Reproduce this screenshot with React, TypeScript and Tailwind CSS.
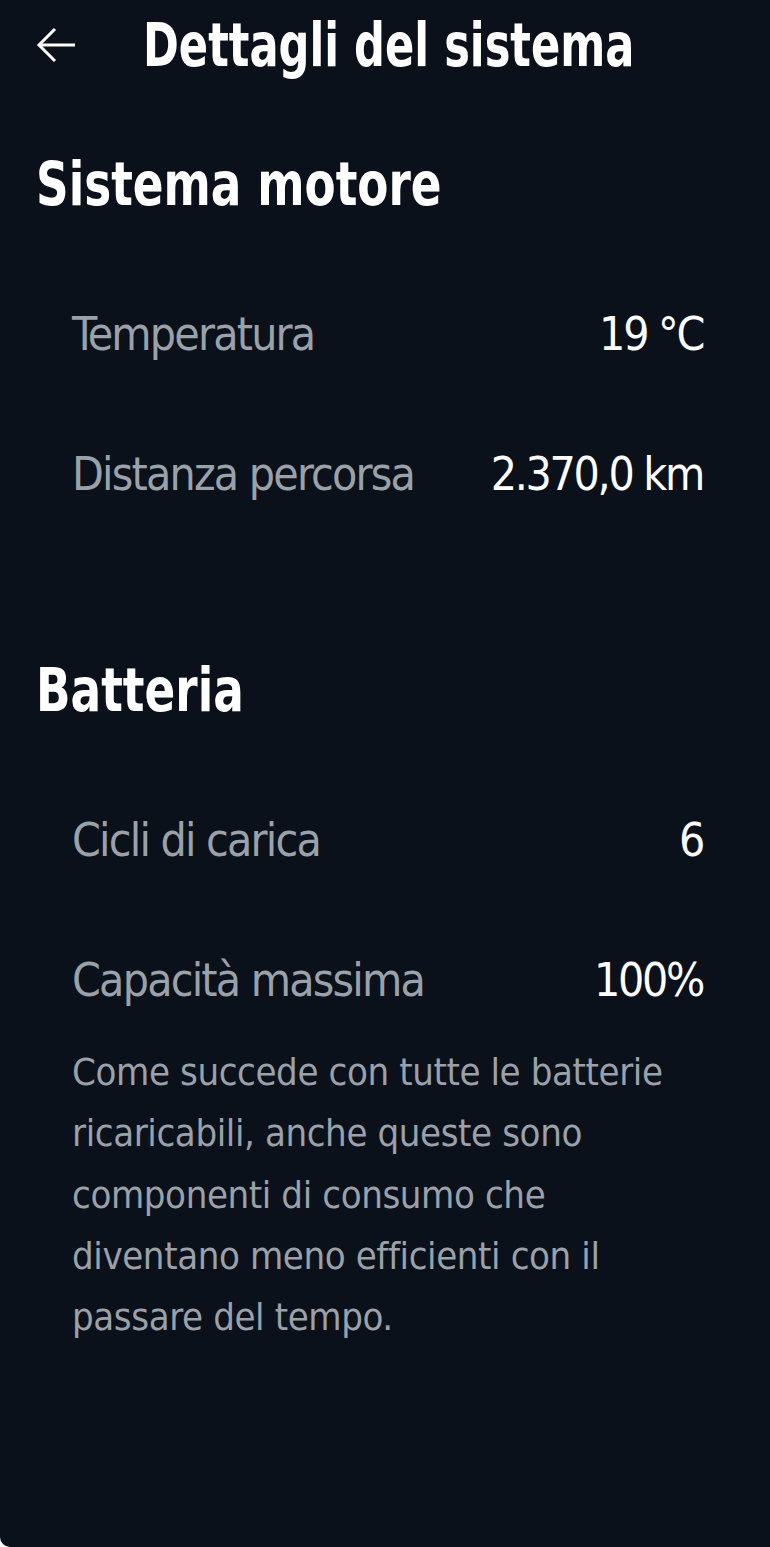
import React from 'react';

const font = { fontFamily: '"Liberation Sans Narrow", "DejaVu Sans Condensed", "Liberation Sans", sans-serif' };

const Row = ({ label, value }: { label: string; value: string }) => (
  <div className="h-[140px] flex items-center justify-between pl-[72px] pr-[67px]">
    <span className="text-[46px] text-[#9aa1a9] leading-none tracking-[-1.8px]">{label}</span>
    <span className="text-[46px] text-white leading-none tracking-[-2.3px]">{value}</span>
  </div>
);

const SectionTitle = ({ children }: { children: React.ReactNode }) => (
  <div className="h-[100px] flex items-center px-9">
    <h2 className="inline-block origin-left scale-x-[0.84] text-[60px] font-bold text-white leading-none whitespace-nowrap">
      {children}
    </h2>
  </div>
);

export default function App() {
  return (
    <div style={font} className="w-[770px] h-[1547px] bg-[#0a111a] rounded-bl-[10px] overflow-hidden">
      {/* Header */}
      <div className="h-[90px] flex items-center pl-9">
        <svg width="40" height="36" viewBox="0 0 40 36" fill="none" stroke="white" strokeWidth="3">
          <path d="M39 18H3" />
          <path d="M19 2L3 18l16 16" />
        </svg>
        <h1 className="ml-[67px] inline-block origin-left scale-x-[0.80] text-[60px] font-bold text-white leading-none whitespace-nowrap">
          Dettagli del sistema
        </h1>
      </div>

      <div className="mt-[44px]">
        <SectionTitle>Sistema motore</SectionTitle>
      </div>
      <div className="mt-[30px]">
        <Row label="Temperatura" value="19 °C" />
        <Row label="Distanza percorsa" value="2.370,0 km" />
      </div>

      <div className="mt-[96px]">
        <SectionTitle>Batteria</SectionTitle>
      </div>
      <div className="mt-[30px]">
        <Row label="Cicli di carica" value="6" />
        <Row label="Capacità massima" value="100%" />
      </div>
      <p className="-mt-[8px] pl-[72px] pr-[90px] text-[38px] leading-[61.3px] tracking-[-0.4px] text-[#9aa1a9]">
        Come succede con tutte le batterie ricaricabili, anche queste sono componenti di consumo che diventano meno efficienti con il passare del tempo.
      </p>
    </div>
  );
}
